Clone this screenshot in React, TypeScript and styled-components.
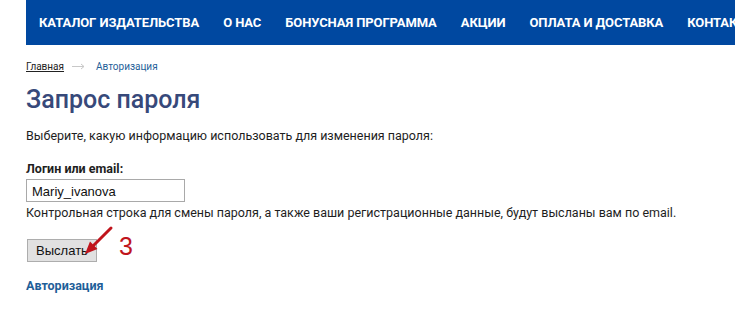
import React from 'react';
import styled, { createGlobalStyle } from 'styled-components';

const GlobalStyle = createGlobalStyle`
  html, body {
    margin: 0;
    padding: 0;
    background: #ffffff;
  }
  body {
    font-family: Roboto, 'Liberation Sans', Arial, sans-serif;
    color: #1e1e1e;
  }
`;

const menuItems = [
  'Каталог издательства',
  'О нас',
  'Бонусная программа',
  'Акции',
  'Оплата и доставка',
  'Контакты',
];

const App = () => {
  return (
    <>
      <GlobalStyle />
      <PageStyle>
        <NavStyle>
          {menuItems.map((item) => (
            <NavItem key={item}>{item}</NavItem>
          ))}
        </NavStyle>
        <ContentStyle>
          <BreadcrumbStyle>
            <a className="crumb-home">Главная</a>
            <svg className="crumb-arrow" width="13" height="7" viewBox="0 0 13 7">
              <path d="M0 3.5 H12" stroke="#c8c8c8" strokeWidth="1" />
              <path d="M9 1 L12 3.5 L9 6" stroke="#c8c8c8" strokeWidth="1" fill="none" />
            </svg>
            <a className="crumb-current">Авторизация</a>
          </BreadcrumbStyle>
          <TitleStyle>Запрос пароля</TitleStyle>
          <TextStyle>
            Выберите, какую информацию использовать для изменения пароля:
          </TextStyle>
          <FieldStyle>
            <label>Логин или email:</label>
            <input type="text" defaultValue="Mariy_ivanova" />
            <TextStyle>
              Контрольная строка для смены пароля, а также ваши регистрационные
              данные, будут высланы вам по email.
            </TextStyle>
          </FieldStyle>
          <SubmitRow>
            <SubmitButton>Выслать</SubmitButton>
            <PointerArrow width="32" height="32" viewBox="0 0 32 32">
              <path
                d="M29 3 L12 20"
                stroke="#c0141c"
                strokeWidth="3"
                strokeLinecap="round"
                fill="none"
              />
              <path d="M3 29 L8 16.5 L15.5 24 Z" fill="#c0141c" />
            </PointerArrow>
            <StepNumber>3</StepNumber>
          </SubmitRow>
          <AuthLink>Авторизация</AuthLink>
        </ContentStyle>
      </PageStyle>
    </>
  );
};

const PageStyle = styled.div`
  width: 735px;
  height: 313px;
  overflow: hidden;
  display: flex;
  flex-direction: column;
`;

const NavStyle = styled.nav`
  margin-left: 26px;
  height: 45px;
  background-color: #0048a0;
  display: flex;
  align-items: center;
  padding-left: 13px;
  gap: 24px;
  white-space: nowrap;
  overflow: hidden;
`;

const NavItem = styled.span`
  color: #ffffff;
  font-size: 13px;
  font-weight: 700;
  text-transform: uppercase;
  letter-spacing: -0.1px;
`;

const ContentStyle = styled.section`
  padding: 15px 0 0 26px;
  display: flex;
  flex-direction: column;
`;

const BreadcrumbStyle = styled.div`
  display: flex;
  align-items: center;
  font-size: 10px;
  height: 12px;

  .crumb-home {
    color: #222222;
    text-decoration: underline;
  }

  .crumb-arrow {
    margin: 1px 11px 0 8px;
  }

  .crumb-current {
    color: #1f5f99;
  }
`;

const TitleStyle = styled.h1`
  margin: 12px 0 12px;
  font-size: 25px;
  line-height: 32px;
  font-weight: 500;
  color: #37497a;
`;

const TextStyle = styled.p`
  margin: 0;
  font-size: 12.5px;
  line-height: 16px;
  color: #1e1e1e;
`;

const FieldStyle = styled.div`
  display: flex;
  flex-direction: column;

  label {
    font-weight: 700;
    font-size: 12.5px;
    line-height: 16px;
    margin-top: 17px;
    color: #1e1e1e;
  }

  input {
    box-sizing: border-box;
    width: 159px;
    height: 23px;
    margin: 2px 0 3px;
    border: 1px solid #a9a9a9;
    padding: 1px 5px 0;
    font-family: 'Liberation Sans', Arial, sans-serif;
    font-size: 13px;
    color: #111111;
    outline: none;
  }
`;

const SubmitRow = styled.div`
  position: relative;
  margin-top: 18px;
  display: flex;
`;

const SubmitButton = styled.button`
  box-sizing: border-box;
  width: 70px;
  height: 23px;
  margin-left: 1px;
  background: #e1e1e1;
  border: 1px solid #adadad;
  font-family: 'Liberation Sans', Arial, sans-serif;
  font-size: 13px;
  color: #111111;
  padding: 0;
`;

const PointerArrow = styled.svg`
  position: absolute;
  left: 56px;
  top: -14px;
`;

const StepNumber = styled.span`
  position: absolute;
  left: 93px;
  top: -5px;
  color: #c0141c;
  font-family: 'Liberation Sans', Arial, sans-serif;
  font-size: 25px;
  line-height: 25px;
`;

const AuthLink = styled.a`
  margin-top: 16px;
  font-size: 12.5px;
  font-weight: 700;
  color: #1f5f99;
`;

export default App;
